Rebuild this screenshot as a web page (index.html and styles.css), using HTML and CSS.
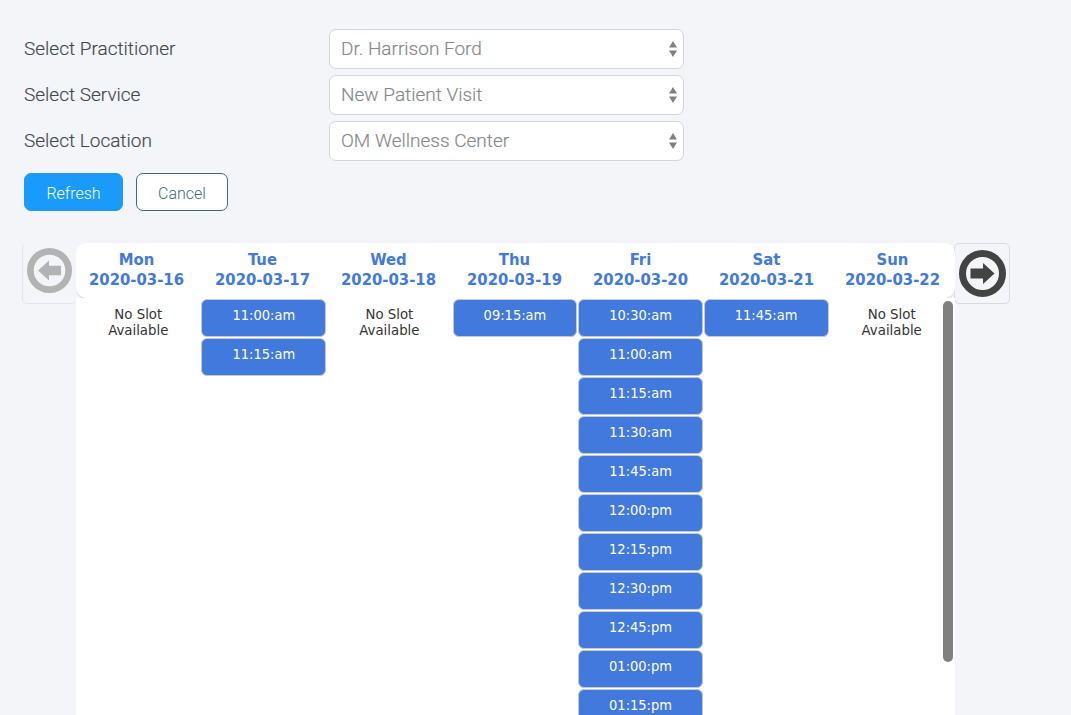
FILE: index.html
```html
<!DOCTYPE html>
<html lang="en">
<head>
<meta charset="utf-8">
<title>Appointment</title>
<link rel="stylesheet" href="styles.css">
</head>
<body>
<main class="page">
  <form class="filters">
    <div class="field"><label>Select Practitioner</label><div class="select"><span>Dr. Harrison Ford</span><svg class="updown" viewBox="0 0 8 16"><path d="M4 0 8 6.500H0ZM4 16 0 9.500H8Z"/></svg></div></div>
    <div class="field"><label>Select Service</label><div class="select"><span>New Patient Visit</span><svg class="updown" viewBox="0 0 8 16"><path d="M4 0 8 6.500H0ZM4 16 0 9.500H8Z"/></svg></div></div>
    <div class="field"><label>Select Location</label><div class="select"><span>OM Wellness Center</span><svg class="updown" viewBox="0 0 8 16"><path d="M4 0 8 6.500H0ZM4 16 0 9.500H8Z"/></svg></div></div>
    <div class="actions">
      <button type="button" class="btn btn-primary">Refresh</button>
      <button type="button" class="btn btn-outline">Cancel</button>
    </div>
  </form>
  <section class="calendar">
    <div class="nav nav-prev">
      <svg viewBox="0 0 47 47" class="nav-icon nav-icon-prev"><circle cx="23.500" cy="23.500" r="20" fill="none" stroke="currentColor" stroke-width="7"/><path fill="currentColor" d="M11.500 23.500 23 13V18.500H35.500V28.500H23V34Z"/></svg>
    </div>
    <div class="board">
      <div class="head">
        <div class="day">Mon<br>2020-03-16</div>
        <div class="day">Tue<br>2020-03-17</div>
        <div class="day">Wed<br>2020-03-18</div>
        <div class="day">Thu<br>2020-03-19</div>
        <div class="day">Fri<br>2020-03-20</div>
        <div class="day">Sat<br>2020-03-21</div>
        <div class="day">Sun<br>2020-03-22</div>
      </div>
      <div class="slots">
        <div class="col"><p class="none">No Slot<br>Available</p></div>
        <div class="col"><a class="slot">11:00:am</a><a class="slot">11:15:am</a></div>
        <div class="col"><p class="none">No Slot<br>Available</p></div>
        <div class="col"><a class="slot">09:15:am</a></div>
        <div class="col">
          <a class="slot">10:30:am</a><a class="slot">11:00:am</a><a class="slot">11:15:am</a><a class="slot">11:30:am</a><a class="slot">11:45:am</a><a class="slot">12:00:pm</a><a class="slot">12:15:pm</a><a class="slot">12:30:pm</a><a class="slot">12:45:pm</a><a class="slot">01:00:pm</a><a class="slot">01:15:pm</a>
        </div>
        <div class="col"><a class="slot">11:45:am</a></div>
        <div class="col"><p class="none">No Slot<br>Available</p></div>
        <div class="thumb"></div>
      </div>
    </div>
    <div class="nav nav-next">
      <svg viewBox="0 0 47 47" class="nav-icon"><circle cx="23.500" cy="23.500" r="20" fill="none" stroke="currentColor" stroke-width="7"/><path fill="currentColor" d="M35.500 23.500 24 13V18.500H11.500V28.500H24V34Z"/></svg>
    </div>
  </section>
</main>
</body>
</html>
```

FILE: styles.css
```css
* { box-sizing: border-box; }
html, body { margin: 0; height: 100%; overflow: hidden; }
body { background: #f3f5f9; font-family: Roboto, sans-serif; }
.page { padding: 29px 0 0 24px; height: 715px; overflow: hidden; }

.filters { display: flex; flex-direction: column; gap: 6px; }
.field { display: flex; align-items: center; height: 40px; }
.field label { width: 305px; padding-bottom: 2px; font-size: 19px; font-weight: 300; color: #44474c; -webkit-text-stroke: 0.15px #44474c; }
.select {
  width: 355px; height: 40px; display: flex; align-items: center; justify-content: space-between;
  padding: 0 6px 2px 11px; background: #fff; border: 1.5px solid #d3d5d8; border-radius: 7px;
  font-size: 19px; font-weight: 300; color: #85878a; -webkit-text-stroke: 0.15px #85878a;
}
.updown { width: 8px; height: 16px; margin-top: 2px; fill: #808080; }

.actions { display: flex; gap: 13px; margin-top: 6px; }
.btn { height: 38px; border-radius: 7px; font-family: Roboto, sans-serif; font-size: 16px; font-weight: 300; padding: 2px 0 0; }
.btn-primary { width: 99px; background: #1a9bfc; border: 1px solid #1a9bfc; color: #fff; }
.btn-outline { width: 92px; background: #fff; border: 1.5px solid #3d6a80; color: #3d6a80; }

.calendar { display: flex; align-items: flex-start; margin: 32px 0 0 -2px; }
.nav { height: 61px; display: flex; align-items: center; justify-content: center; border-radius: 5px; flex: none; }
.nav-prev { width: 54px; color: #b3b3b3; background: #f3f5f9; border: 1px solid #e4e5e8; border-right: 0; border-top: 0; padding: 0 0 5px 0; }
.nav-next { width: 56px; margin-left: -1px; padding-bottom: 1px; color: #434343; background: #f3f5f9; border: 1px solid #d9dadd; }
.nav-icon { width: 47px; height: 47px; }
.nav-icon-prev { width: 45px; height: 45px; }

.board { width: 879px; height: 472px; font-family: "DejaVu Sans", sans-serif; font-stretch: condensed; }
.head { display: grid; grid-template-columns: repeat(7, 126px); justify-content: center; height: 55px; padding: 7px 0 0; background: #fff; border-radius: 10px; box-shadow: 0 1px 0 #d6d6d6; position: relative; }
.day { margin-left: -2px; text-align: center; font-size: 16.500px; line-height: 20px; font-weight: 700; color: #4279dc; }
.slots { position: relative; display: grid; grid-template-columns: repeat(7, 1fr); padding-top: 1px; overflow: hidden; height: 417px; background: #fff; }
.col { display: flex; flex-direction: column; gap: 1px; min-width: 0; }
.slot { display: block; height: 38px; margin: 0 0.900px 0 -0.200px; padding-top: 6px; text-align: center; font-size: 14.500px; line-height: 18px; color: #fff; background: #4279dc; border: 1.5px solid #c6c9cd; border-radius: 6px; }
.none { margin: 7px 0 0 -1px; text-align: center; font-size: 14.800px; line-height: 16px; color: #333; }
.thumb { position: absolute; top: 3px; right: 2px; width: 10px; height: 361px; border-radius: 5px; background: #808080; }
```
